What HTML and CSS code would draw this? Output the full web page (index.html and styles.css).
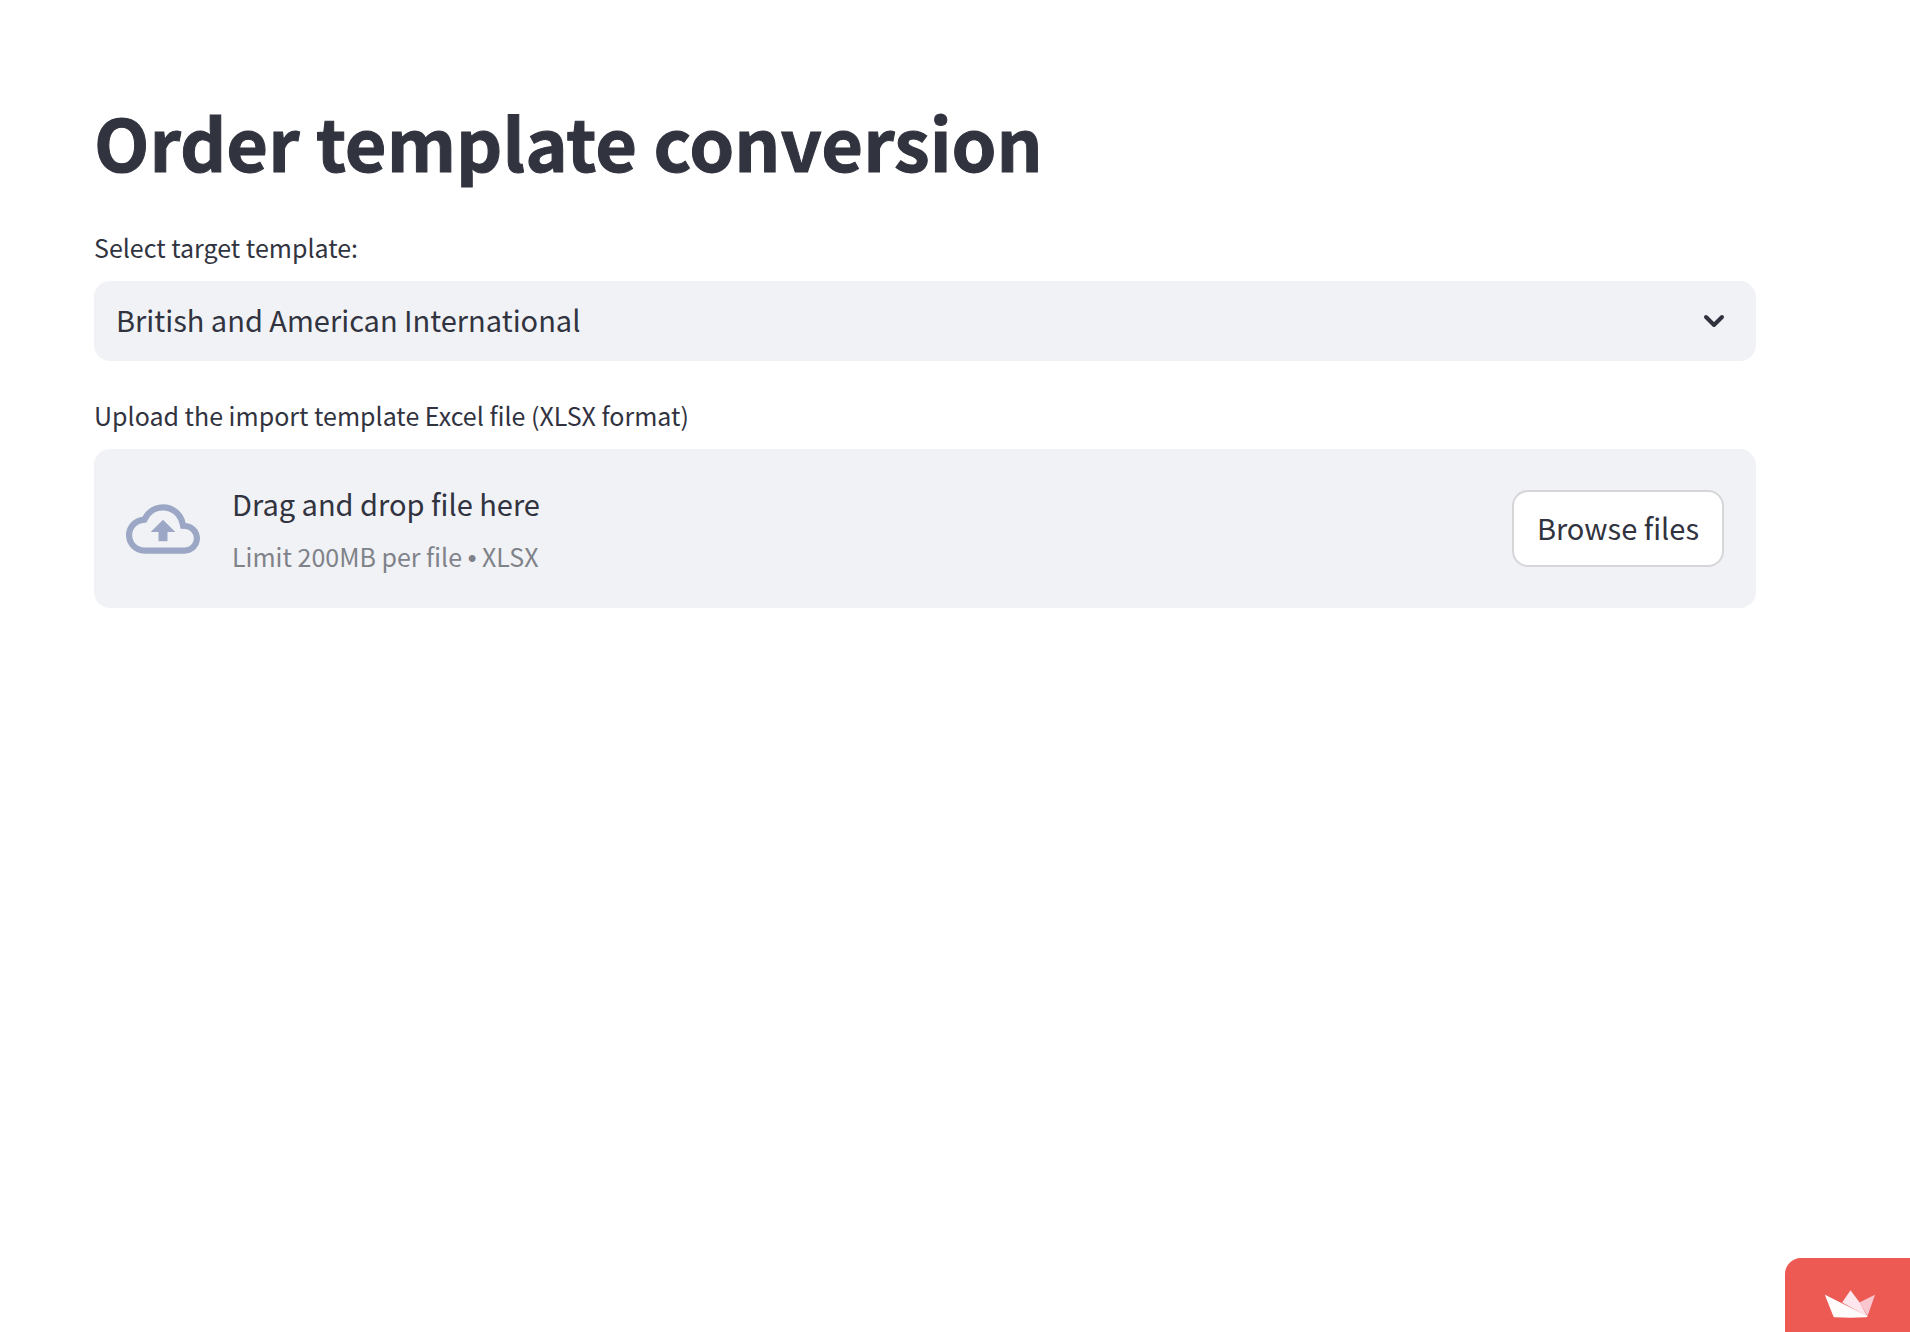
FILE: index.html
```html
<!DOCTYPE html>
<html lang="en">
<head>
<meta charset="utf-8">
<meta name="viewport" content="width=device-width, initial-scale=1">
<title>Order template conversion</title>
<link rel="stylesheet" href="styles.css">
</head>
<body>
<main class="page">
  <h1 class="title">Order template conversion</h1>

  <div class="field">
    <label class="field-label" for="template">Select target template:</label>
    <div class="select-box">
      <select class="select" id="template">
        <option>British and American International</option>
      </select>
      <svg class="chevron" viewBox="0 0 24 16" aria-hidden="true"><path d="M4 4l8 8 8-8"/></svg>
    </div>
  </div>

  <div class="field">
    <label class="field-label" for="browse">Upload the import template Excel file (XLSX format)</label>
    <section class="dropzone">
      <svg class="cloud" viewBox="0 0 24 24" aria-hidden="true"><path d="M19.35 10.04A7.49 7.49 0 0012 4C9.11 4 6.6 5.64 5.35 8.04A5.994 5.994 0 000 14c0 3.31 2.69 6 6 6h13c2.76 0 5-2.24 5-5 0-2.64-2.05-4.78-4.65-4.96zM19 18H6c-2.21 0-4-1.79-4-4 0-2.05 1.53-3.76 3.56-3.97l1.07-.11.5-.95A5.469 5.469 0 0112 6c2.62 0 4.88 1.86 5.39 4.43l.3 1.5 1.53.11A2.98 2.98 0 0122 15c0 1.65-1.35 3-3 3zM8 13h2.55v3h2.9v-3H16l-4-4z"/></svg>
      <div class="hint">
        <span class="hint-main">Drag and drop file here</span>
        <small class="hint-limit">Limit 200MB per file <span class="bullet">•</span> XLSX</small>
      </div>
      <button class="browse" id="browse" type="button">Browse files</button>
    </section>
  </div>
</main>

<a class="badge" href="#" aria-label="Hosted with Streamlit">
  <svg class="crown" viewBox="0 0 52 28" aria-hidden="true">
    <path fill="#f9c5cf" d="M51 4.500L35 12.500 43.500 26z"/>
    <path fill="#fde6ec" d="M26 0L17.500 12.500 43.500 27 35 12z"/>
    <path fill="#fffdfc" d="M0 4.500L43.500 26.500Q43 27.500 42 27.500Q26 28.500 10 27.500Q9 27.500 8.500 26.500L0 5z"/>
  </svg>
</a>
</body>
</html>
```
FILE: styles.css
```css
* {
  box-sizing: border-box;
}

body {
  margin: 0;
  background: #fff;
  color: #31333f;
  font-family: "Noto Sans CJK SC", "Noto Sans", sans-serif;
  font-size: 29px;
  line-height: 48px;
}

.page {
  display: flex;
  flex-direction: column;
  gap: 36px;
  padding: 91px 154px 80px 94px;
}

.title {
  margin: 0 0 2px;
  font-size: 72px;
  font-weight: 700;
  line-height: 100px;
  -webkit-text-stroke: 1px currentColor;
}

.field {
  display: flex;
  flex-direction: column;
  gap: 16px;
}

.field-label {
  font-size: 25px;
  line-height: 36px;
}

.select-box {
  display: grid;
  align-items: center;
}

.select,
.chevron {
  grid-area: 1 / 1;
}

.select {
  width: 100%;
  height: 80px;
  padding: 0 80px 4px 22px;
  border: 0;
  border-radius: 16px;
  background: #f0f2f6;
  color: inherit;
  font: inherit;
  appearance: none;
}

.chevron {
  justify-self: end;
  width: 24px;
  height: 16px;
  margin-right: 30px;
  fill: none;
  stroke: #31333f;
  stroke-width: 4;
  stroke-linecap: round;
  stroke-linejoin: round;
  pointer-events: none;
}

.dropzone {
  display: flex;
  align-items: center;
  gap: 32px;
  min-height: 159px;
  padding: 0 32px;
  border-radius: 16px;
  background: #f0f2f6;
}

.cloud {
  flex: none;
  width: 74px;
  height: 74px;
  fill: #9ba7c5;
}

.hint {
  display: flex;
  flex: 1;
  flex-direction: column;
  gap: 8px;
}

.hint-limit {
  color: #808289;
  font-size: 25px;
  line-height: 42px;
}

.bullet {
  font-family: "Liberation Sans", sans-serif;
}

.browse {
  height: 77px;
  padding: 0 23px 4px;
  border: 2px solid #d6d6d9;
  border-radius: 16px;
  background: #fff;
  color: inherit;
  font: inherit;
}

.badge {
  position: fixed;
  right: 0;
  bottom: 0;
  display: flex;
  padding: 32px 34px 14px 40px;
  border-top-left-radius: 16px;
  background: #ed5a53;
}

.crown {
  width: 51px;
  height: 28px;
}
```
